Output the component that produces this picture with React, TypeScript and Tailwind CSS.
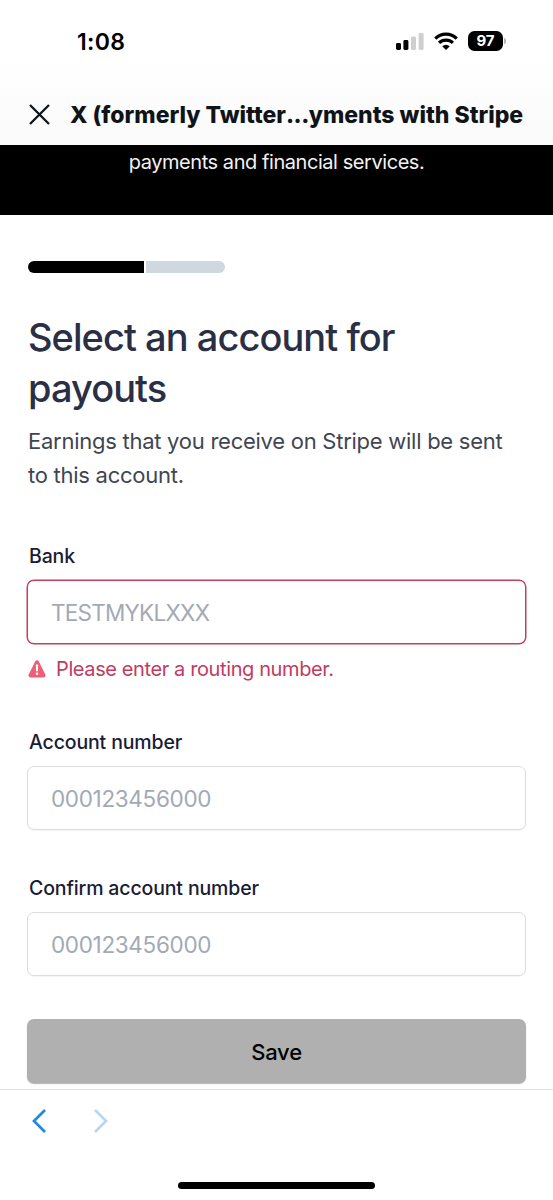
interface FieldProps {
  label: string;
  placeholder: string;
  placeholderClass: string;
  error?: string;
}

function StatusBar() {
  return (
    <div className="flex h-[84px] items-start justify-between pl-[77px] pr-[47px]">
      <span className="pt-[27px] text-[23px] leading-[30px] font-semibold tracking-[0.3px] text-black">1:08</span>
      <div className="flex items-center pt-[31px]">
        <svg width="29" height="20" viewBox="0 0 29 20" className="mr-[10px]">
          <rect x="1" y="12" width="5" height="7" rx="1.4" fill="#000" />
          <rect x="8.4" y="9" width="5" height="10" rx="1.4" fill="#000" />
          <rect x="16" y="5.5" width="5" height="13.5" rx="1.4" fill="#cfcfcf" />
          <rect x="23.6" y="2" width="5" height="17" rx="1.4" fill="#cfcfcf" />
        </svg>
        <svg width="24" height="20" viewBox="0 0 24 20" className="mr-[10px]" fill="none" stroke="#000" strokeWidth="3.2">
          <path d="M1.3 7.6a15.2 15.2 0 0 1 21.4 0" />
          <path d="M5.1 11.9a9.8 9.8 0 0 1 13.8 0" />
          <path d="M8.2 15.3a5.8 5.8 0 0 1 7.6 0L12 19z" fill="#000" stroke="none" />
        </svg>
        <div className="flex h-5 w-[35px] items-center justify-center rounded-[6.5px] bg-black text-[15px] font-bold text-white">
          97
        </div>
        <div className="ml-px h-[6px] w-[2px] rounded-r-full bg-[#b5b5b5]" />
      </div>
    </div>
  );
}

function Header() {
  return (
    <div className="flex h-[61px] items-center pl-[29px]">
      <svg width="21" height="21" viewBox="0 0 21 21" stroke="#0f1419" strokeWidth="2.3" className="mr-5 shrink-0">
        <path d="M1 1l19 19M20 1L1 20" />
      </svg>
      <h1 className="whitespace-nowrap text-[23px] leading-[30px] font-extrabold text-[#0f1419]">
        X (formerly Twitter<span className="tracking-[-0.5px]">...</span>yments with Stripe
      </h1>
    </div>
  );
}

function Field({ label, placeholder, placeholderClass, error }: FieldProps) {
  return (
    <div>
      <label className="block pl-[2px] text-[19.5px] leading-7 font-medium tracking-[-0.14px] whitespace-nowrap text-[#1a1b35]">
        {label}
      </label>
      <input
        type="text"
        placeholder={placeholder}
        className={`mt-[10px] block h-16 w-full rounded-[7px] border bg-white px-[23px] text-[22.5px] outline-none placeholder:text-[#a3a9b5] ${placeholderClass} ${
          error ? 'border-[#c43e60] shadow-[0_0_0_0.5px_#c43e60]' : 'border-[#dcdde0] shadow-[0_1px_1px_rgba(0,0,0,0.04)]'
        }`}
      />
      {error && (
        <div className="mt-[11px] flex h-7 items-center text-[#c23b60]">
          <svg width="18" height="18" viewBox="0 0 18 18" className="ml-px mr-[10px] shrink-0">
            <path d="M7.1 1.5a2.1 2.1 0 0 1 3.8 0l6.4 13a2 2 0 0 1-1.8 2.9h-13a2 2 0 0 1-1.8-2.9z" fill="#ed5f74" />
            <path d="M9 5.3v5.2" stroke="#fff" strokeWidth="2.1" strokeLinecap="round" />
            <circle cx="9" cy="13.7" r="1.3" fill="#fff" />
          </svg>
          <span className="whitespace-nowrap text-[20px] leading-7 tracking-[-0.39px]">{error}</span>
        </div>
      )}
    </div>
  );
}

export default function App() {
  return (
    <div className="flex h-[1200px] w-[553px] flex-col overflow-hidden bg-white font-['Inter','Liberation_Sans',sans-serif]">
      <header className="h-[145px] shrink-0 bg-linear-to-b from-white from-40% to-[#fafafa]">
        <StatusBar />
        <Header />
      </header>

      <div className="h-[70px] shrink-0 bg-black pt-[2px] text-center text-[20px] leading-[30px] tracking-[-0.44px] text-[#f2f2f2]">
        payments and financial services.
      </div>

      <main className="h-[874px] shrink-0 px-[27px] pt-[46px]">
        <div className="ml-px flex h-3 gap-[2px]">
          <div className="w-[116px] rounded-l-full bg-black" />
          <div className="w-[79px] rounded-r-full bg-[#cfd7df]" />
        </div>
        <h2 className="mt-[39px] pl-px text-[38px] leading-[51px] font-medium tracking-[-0.95px] whitespace-nowrap text-[#2a2f45]">
          Select an account for
          <br />
          payouts
        </h2>
        <p className="mt-[10px] pl-px text-[22px] leading-[34px] tracking-[-0.26px] whitespace-nowrap text-[#414552]">
          Earnings that you receive on Stripe will be sent
          <br />
          to this account.
        </p>
        <div className="mt-[50px] flex flex-col">
          <Field
            label="Bank"
            placeholder="TESTMYKLXXX"
            placeholderClass="tracking-[-0.75px]"
            error="Please enter a routing number."
          />
          <div className="mt-[45px]">
            <Field label="Account number" placeholder="000123456000" placeholderClass="tracking-[-0.33px]" />
          </div>
          <div className="mt-11">
            <Field label="Confirm account number" placeholder="000123456000" placeholderClass="tracking-[-0.33px]" />
          </div>
        </div>
        <button
          type="button"
          className="mt-[43px] block h-16 w-full rounded-[7px] bg-[#b0b0b0] pt-[2px] text-[22px] font-medium tracking-[-0.2px] text-black shadow-[0_1px_1px_rgba(0,0,0,0.3)]"
        >
          Save
        </button>
      </main>

      <footer className="flex h-[111px] shrink-0 flex-col items-center justify-between border-t border-[#e2e2e2] bg-white pb-[11px]">
        <div className="flex w-full gap-12 pt-[19px] pl-8">
          <svg width="14" height="24" viewBox="0 0 14 24" fill="none" stroke="#1d8ade" strokeWidth="2.7">
            <path d="M13 1L2 12l11 11" />
          </svg>
          <svg width="14" height="24" viewBox="0 0 14 24" fill="none" stroke="#b5d7f3" strokeWidth="2.7">
            <path d="M1 1l11 11L1 23" />
          </svg>
        </div>
        <div className="h-[7px] w-[197px] rounded-full bg-black" />
      </footer>
    </div>
  );
}
